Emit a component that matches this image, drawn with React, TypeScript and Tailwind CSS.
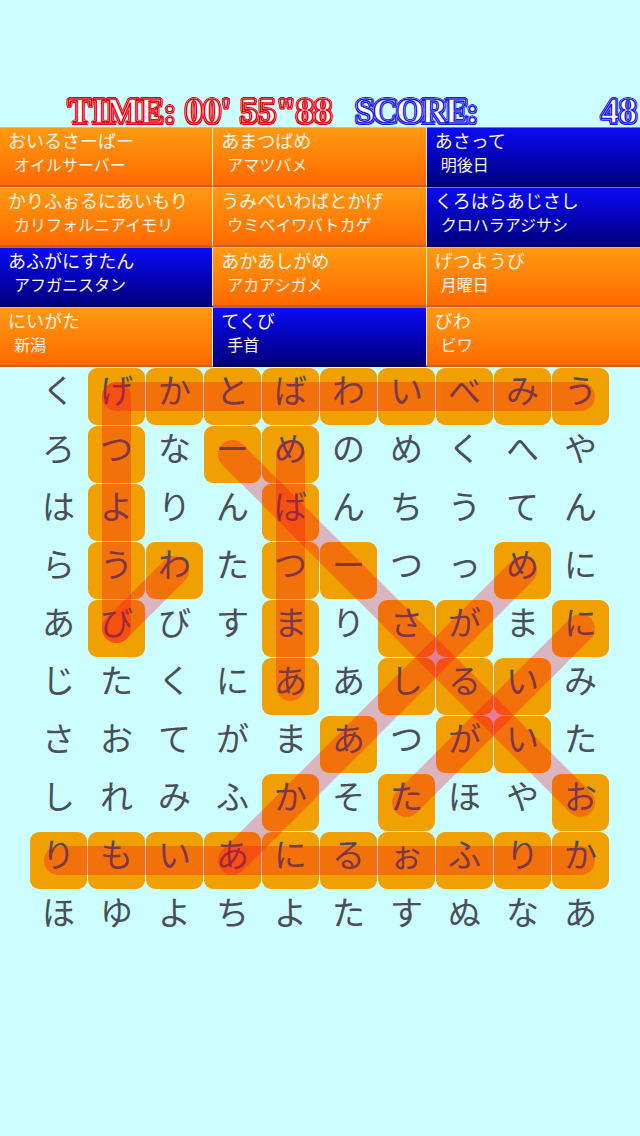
import React from "react";

type Card = { kana: string; sub: string; found: boolean };

const cards: Card[] = [
  { kana: "おいるさーばー", sub: "オイルサーバー", found: true },
  { kana: "あまつばめ", sub: "アマツバメ", found: true },
  { kana: "あさって", sub: "明後日", found: false },
  { kana: "かりふぉるにあいもり", sub: "カリフォルニアイモリ", found: true },
  { kana: "うみべいわばとかげ", sub: "ウミベイワバトカゲ", found: true },
  { kana: "くろはらあじさし", sub: "クロハラアジサシ", found: false },
  { kana: "あふがにすたん", sub: "アフガニスタン", found: false },
  { kana: "あかあしがめ", sub: "アカアシガメ", found: true },
  { kana: "げつようび", sub: "月曜日", found: true },
  { kana: "にいがた", sub: "新潟", found: true },
  { kana: "てくび", sub: "手首", found: false },
  { kana: "びわ", sub: "ビワ", found: true },
];

const board = [
  "くげかとばわいべみう",
  "ろつなーめのめくへや",
  "はよりんばんちうてん",
  "らうわたつーつっめに",
  "あびびすまりさがまに",
  "じたくにああしるいみ",
  "さおてがまあつがいた",
  "しれみふかそたほやお",
  "りもいあにるぉふりか",
  "ほゆよちよたすぬなあ",
];

// highlighted cells, "row,col"
const marked = new Set<string>([
  "0,1", "0,2", "0,3", "0,4", "0,5", "0,6", "0,7", "0,8", "0,9",
  "1,1", "1,3", "1,4",
  "2,1", "2,4",
  "3,1", "3,2", "3,4", "3,5", "3,8",
  "4,1", "4,4", "4,6", "4,7", "4,9",
  "5,4", "5,6", "5,7", "5,8",
  "6,5", "6,7", "6,8",
  "7,4", "7,6", "7,9",
  "8,0", "8,1", "8,2", "8,3", "8,4", "8,5", "8,6", "8,7", "8,8", "8,9",
]);

// found words: [r1, c1, r2, c2]
const lines: [number, number, number, number][] = [
  [0, 1, 0, 9],
  [0, 1, 4, 1],
  [4, 1, 3, 2],
  [8, 0, 8, 9],
  [5, 4, 1, 4],
  [7, 9, 1, 3],
  [8, 3, 3, 8],
  [4, 9, 7, 6],
];

const pos = (i: number) => 28.5 + i * 58;

function WordCard({ card, col }: { card: Card; col: number }) {
  const edge = col < 2 ? (card.found ? "border-r border-r-[#ffe6c8]" : "border-r border-r-[#e6e6ff]") : "";
  return (
    <div
      className={
        card.found
          ? `h-[60px] overflow-hidden bg-linear-to-b from-[#ff9a12] to-[#ff6800] border-t border-t-[#ffb45a] border-b-2 border-b-[#c4602a] ${edge}`
          : `h-[60px] overflow-hidden bg-linear-to-b from-[#0c0cf6] to-[#00007e] border-t border-t-[#6c6cff] border-b-2 border-b-[#00005a] ${edge}`
      }
    >
      <div className="pl-[8px] font-['Noto_Sans_CJK_JP',sans-serif] text-[#fff4ea]">
        <div className="text-[18px] leading-[25px]">{card.kana}</div>
        <div className="pl-[6px] text-[16px] leading-[23px]">{card.sub}</div>
      </div>
    </div>
  );
}

export default function App() {
  return (
    <div className="min-h-[1136px] w-[640px] bg-[#ccfeff] pt-[96px]">
      {/* timer + score */}
      <div className="flex h-[31px] items-center pl-[68px] pr-[3px] font-['Liberation_Serif',serif] text-[36px] font-bold leading-[31px] text-white">
        <span className="w-[287px] [-webkit-text-stroke:1.5px_#e20010] [text-shadow:1px_0_#fff,-1px_0_#fff,0_1px_#fff,0_-1px_#fff,2px_0_#e20010,-2px_0_#e20010,0_2px_#e20010,0_-2px_#e20010,1.5px_1.5px_#e20010,-1.5px_1.5px_#e20010,1.5px_-1.5px_#e20010,-1.5px_-1.5px_#e20010]">
          TIME: 00' 55"88
        </span>
        <span className="tracking-[-2.5px] [-webkit-text-stroke:1.5px_#1a1ae0] [text-shadow:1px_0_#fff,-1px_0_#fff,0_1px_#fff,0_-1px_#fff,2px_0_#1a1ae0,-2px_0_#1a1ae0,0_2px_#1a1ae0,0_-2px_#1a1ae0,1.5px_1.5px_#1a1ae0,-1.5px_1.5px_#1a1ae0,1.5px_-1.5px_#1a1ae0,-1.5px_-1.5px_#1a1ae0]">
          SCORE:
        </span>
        <span className="ml-auto [-webkit-text-stroke:1.5px_#1a1ae0] [text-shadow:1px_0_#fff,-1px_0_#fff,0_1px_#fff,0_-1px_#fff,2px_0_#1a1ae0,-2px_0_#1a1ae0,0_2px_#1a1ae0,0_-2px_#1a1ae0,1.5px_1.5px_#1a1ae0,-1.5px_1.5px_#1a1ae0,1.5px_-1.5px_#1a1ae0,-1.5px_-1.5px_#1a1ae0]">
          48
        </span>
      </div>

      {/* word list */}
      <div className="grid grid-cols-3">
        {cards.map((c, i) => (
          <WordCard key={i} card={c} col={i % 3} />
        ))}
      </div>

      {/* board */}
      <div className="relative ml-[30px] mt-px w-[579px]">
        <div className="grid grid-cols-[repeat(10,57px)] gap-px">
          {board.map((row, r) =>
            Array.from(row).map((ch, c) => (
              <div
                key={`${r}-${c}`}
                className={`flex h-[57px] items-center justify-center rounded-[9px] pb-[14px] font-['Noto_Sans_CJK_JP',sans-serif] text-[33px] leading-none text-[#4a4e58] ${
                  marked.has(`${r},${c}`) ? "bg-[#f0a000]" : ""
                }`}
              >
                {ch}
              </div>
            ))
          )}
        </div>
        <svg className="pointer-events-none absolute inset-0" width={579} height={579}>
          {lines.map(([r1, c1, r2, c2], i) => (
            <line
              key={i}
              x1={pos(c1)}
              y1={pos(r1)}
              x2={pos(c2)}
              y2={pos(r2)}
              stroke="rgb(252,0,35)"
              strokeOpacity={0.29}
              strokeWidth={29}
              strokeLinecap="round"
            />
          ))}
        </svg>
      </div>
    </div>
  );
}
